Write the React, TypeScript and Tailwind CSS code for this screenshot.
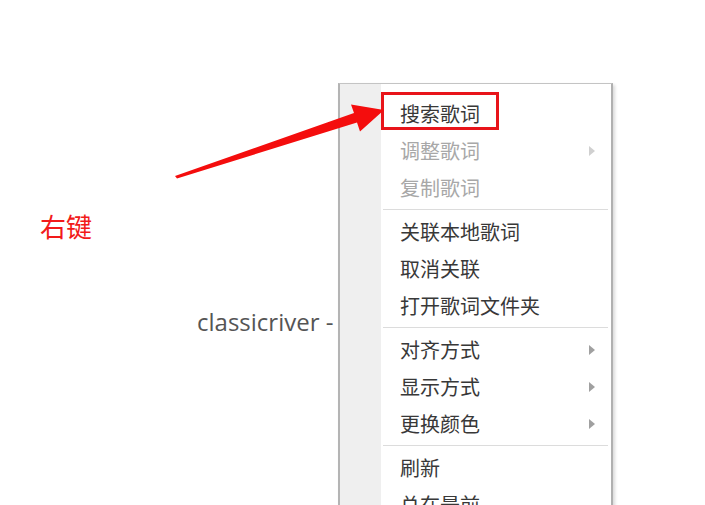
import React from "react"

type Item = { label: string; disabled?: boolean; sub?: boolean; boxed?: boolean }

const groups: Item[][] = [
  [
    { label: "搜索歌词", boxed: true },
    { label: "调整歌词", disabled: true, sub: true },
    { label: "复制歌词", disabled: true },
  ],
  [{ label: "关联本地歌词" }, { label: "取消关联" }, { label: "打开歌词文件夹" }],
  [
    { label: "对齐方式", sub: true },
    { label: "显示方式", sub: true },
    { label: "更换颜色", sub: true },
  ],
  [{ label: "刷新" }, { label: "总在最前" }],
]

const MenuRow = ({ item }: { item: Item }) => (
  <div className="relative flex h-[37px] items-center pl-[19px] pr-[14px]">
    {item.boxed && (
      <div className="absolute left-0 top-[-3px] h-[38px] w-[118px] border-[3px] border-[#e8141a]" />
    )}
    <span
      className={`flex-1 text-[20px] leading-none ${
        item.disabled ? "text-[#a8a8a8]" : "text-[#383838]"
      }`}
    >
      {item.label}
    </span>
    {item.sub && (
      <svg width="6" height="10" viewBox="0 0 6 10" className="mr-[2px]">
        <path
          d="M0 0 L6 5 L0 10 Z"
          fill={item.disabled ? "#d0d0d0" : "#a0a0a0"}
        />
      </svg>
    )}
  </div>
)

export default function App() {
  return (
    <div
      className="relative h-[505px] w-[705px] overflow-hidden bg-white"
      style={{ fontFamily: '"Noto Sans CJK SC", "Noto Sans", sans-serif' }}
    >
      <div className="pl-[40px] pt-[213px] text-[26px] leading-none text-[#f21a1a]">
        右键
      </div>
      <div
        className="pl-[197px] pt-[71px] text-[24px] leading-none text-[#555555]"
        style={{ fontFamily: '"Open Sans", "Noto Sans", sans-serif' }}
      >
        classicriver -
      </div>

      <div className="absolute left-[338px] top-[83px] flex w-[275px] border border-[#c4c4c4] border-l-[2px] border-l-[#b4b4b4] border-r-[2px] border-r-[#b0b0b0] bg-white shadow-[2px_2px_3px_rgba(0,0,0,0.15)]">
        <div className="w-[41px] shrink-0 bg-[#efefef]" />
        <div className="flex-1 pt-[11px]">
          {groups.map((g, gi) => (
            <div key={gi}>
              {gi > 0 && (
                <div className="flex h-[7px] items-center pl-[2px] pr-[3px]">
                  <div className="h-[1px] w-full bg-[#dcdcdc]" />
                </div>
              )}
              {g.map((item) => (
                <MenuRow key={item.label} item={item} />
              ))}
            </div>
          ))}
        </div>
      </div>

      <svg
        className="pointer-events-none absolute left-0 top-0"
        width="705"
        height="505"
        viewBox="0 0 705 505"
      >
        <polygon
          points="175,176 354,113 351,104.5 384,110 360,131.5 357,122.5 177,178.5"
          fill="#f40d0d"
        />
      </svg>
    </div>
  )
}
